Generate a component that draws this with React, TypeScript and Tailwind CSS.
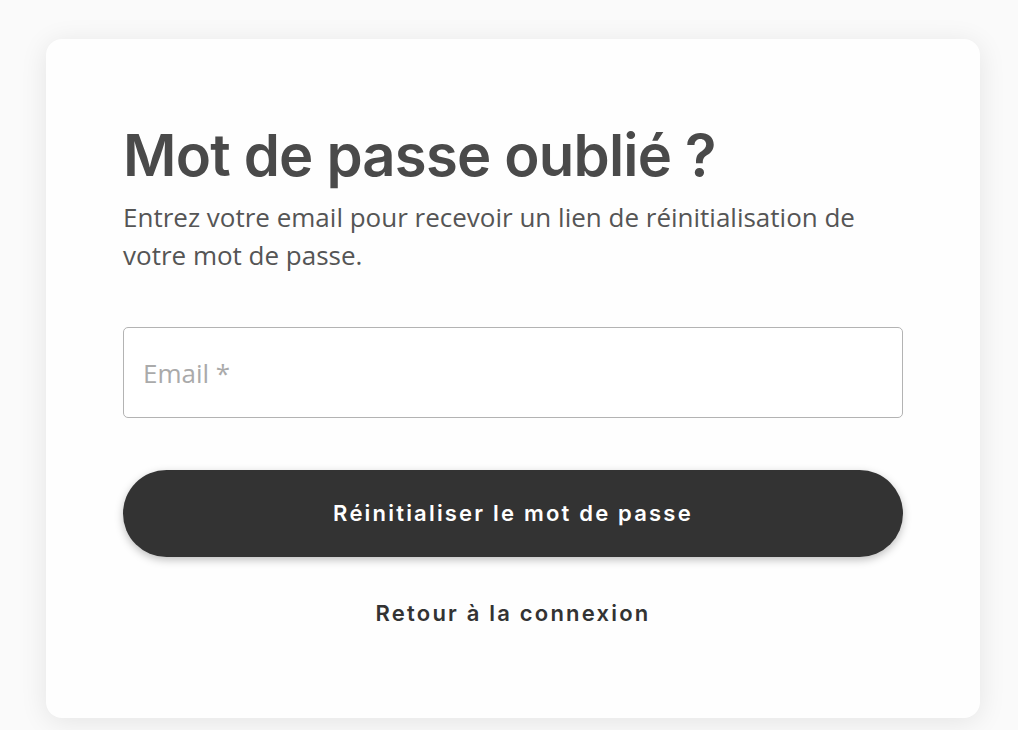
import { useState } from "react";

export default function App() {
  const [email, setEmail] = useState("");

  return (
    <div className="min-h-[730px] w-full bg-[#fafafa] px-[46px] pt-[39px] pb-[12px]">
      {/* Card */}
      <div className="h-[679px] w-[934px] rounded-[16px] bg-[#fefefe] px-[77px] pt-[81px] shadow-[0_4px_28px_rgba(0,0,0,0.09)]">
        <h1 className="font-['Inter',sans-serif] text-[58px] font-semibold leading-[70px] tracking-[-0.8px] text-[#4a4a4a]">
          Mot de passe oublié ?
        </h1>
        <p className="mt-[8px] font-['Open_Sans',sans-serif] text-[26px] leading-[38px] text-[#555555]">
          Entrez votre email pour recevoir un lien de réinitialisation de votre mot de passe.
        </p>

        <form className="mt-[53px] flex flex-col" onSubmit={(e) => e.preventDefault()}>
          <input
            type="email"
            value={email}
            onChange={(e) => setEmail(e.target.value)}
            placeholder="Email *"
            className="h-[91px] w-full rounded-[5px] border border-[#b3b3b3] bg-white px-[19px] font-['Open_Sans',sans-serif] text-[26px] text-[#333] outline-none placeholder:text-[#aaaaaa]"
          />

          <button
            type="submit"
            className="mt-[52px] h-[87px] w-full rounded-full bg-[#333333] font-['Inter',sans-serif] text-[22px] font-semibold tracking-[2.2px] text-white shadow-[0_3px_8px_rgba(0,0,0,0.25)]"
          >
            Réinitialiser le mot de passe
          </button>

          <a
            href="#"
            className="mx-auto mt-[40px] font-['Inter',sans-serif] text-[22px] font-semibold tracking-[2.2px] text-[#333333]"
          >
            Retour à la connexion
          </a>
        </form>
      </div>
    </div>
  );
}
